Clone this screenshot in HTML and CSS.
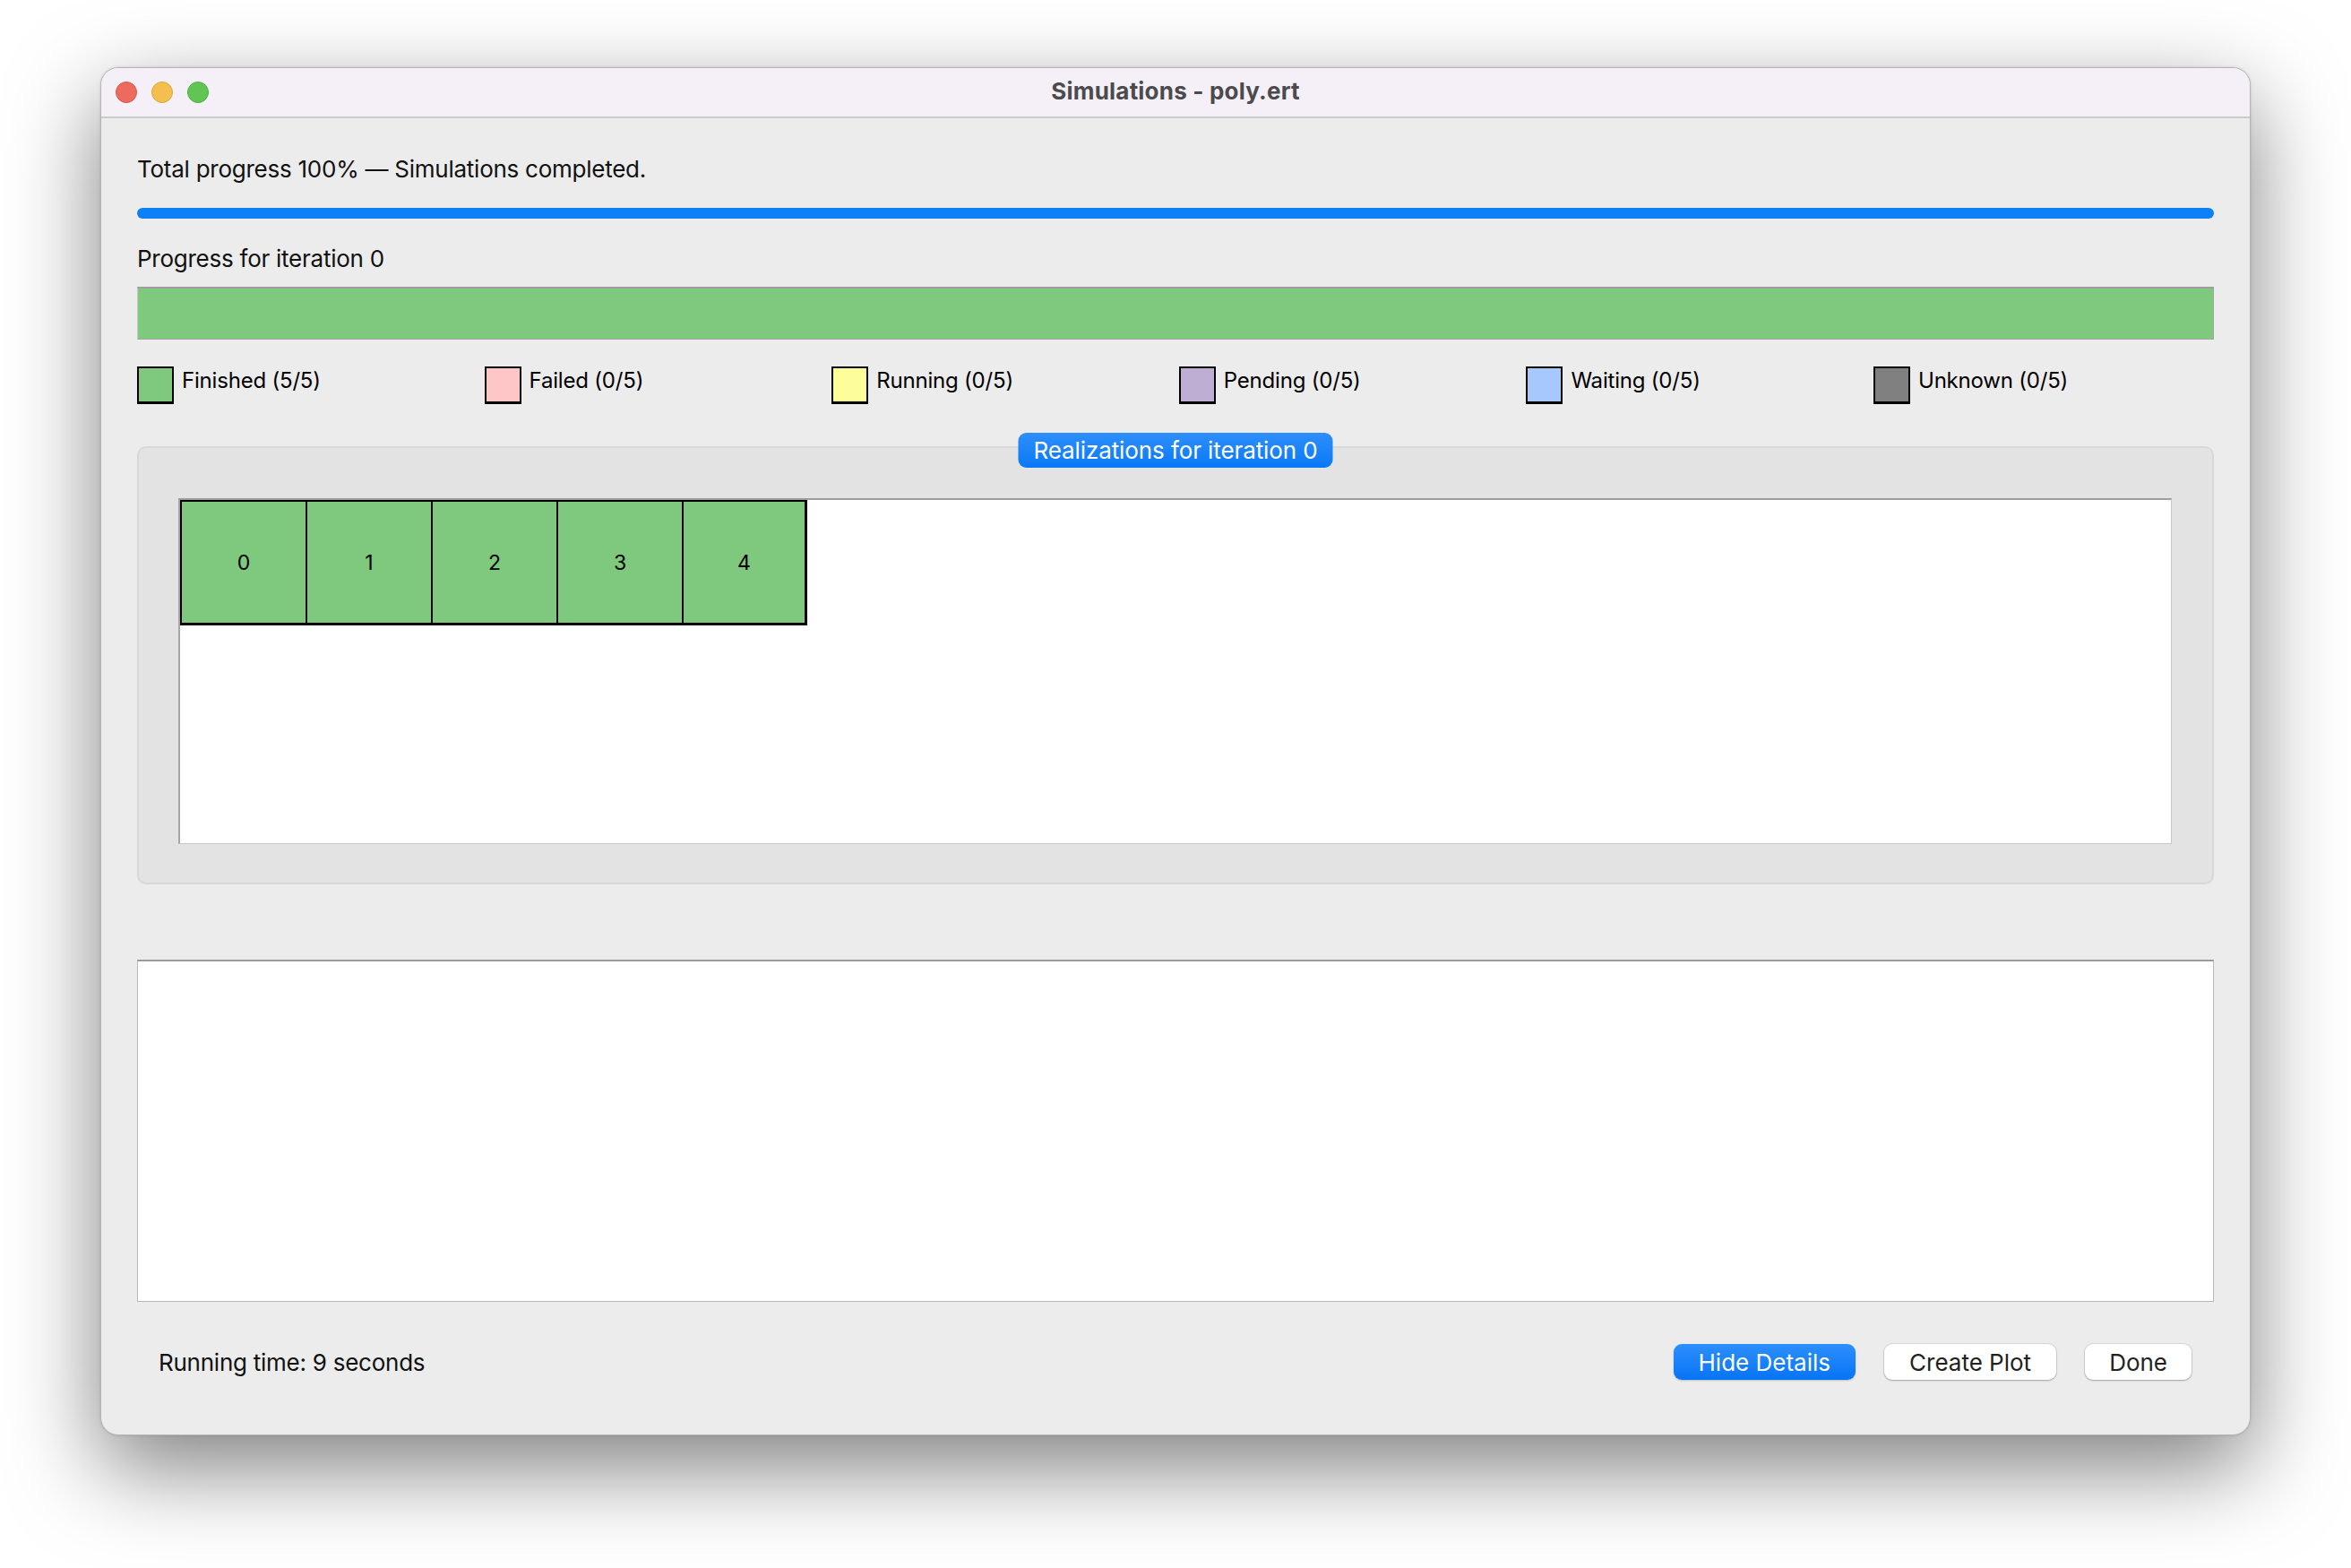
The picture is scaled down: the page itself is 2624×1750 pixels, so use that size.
FILE: index.html
```html
<!DOCTYPE html>
<html>
<head>
<meta charset="utf-8">
<title>Simulations - poly.ert</title>
<link rel="stylesheet" href="styles.css">
</head>
<body>
<div class="desktop">
  <div class="window">
    <div class="titlebar">
      <div class="lights">
        <span class="light red"></span>
        <span class="light yellow"></span>
        <span class="light green"></span>
      </div>
      <div class="title">Simulations - poly.ert</div>
    </div>
    <div class="content">
      <div class="label total">Total progress 100% — Simulations completed.</div>
      <div class="totalbar"></div>
      <div class="label iter">Progress for iteration 0</div>
      <div class="iterbar"></div>
      <div class="legend">
        <div class="item"><span class="swatch finished"></span><span class="lbl">Finished (5/5)</span></div>
        <div class="item"><span class="swatch failed"></span><span class="lbl">Failed (0/5)</span></div>
        <div class="item"><span class="swatch running"></span><span class="lbl">Running (0/5)</span></div>
        <div class="item"><span class="swatch pending"></span><span class="lbl">Pending (0/5)</span></div>
        <div class="item"><span class="swatch waiting"></span><span class="lbl">Waiting (0/5)</span></div>
        <div class="item"><span class="swatch unknown"></span><span class="lbl">Unknown (0/5)</span></div>
      </div>
      <div class="group">
        <div class="group-title">Realizations for iteration 0</div>
        <div class="grid-area">
          <div class="cells">
            <div class="cell">0</div>
            <div class="cell">1</div>
            <div class="cell">2</div>
            <div class="cell">3</div>
            <div class="cell">4</div>
          </div>
        </div>
      </div>
      <div class="details"></div>
      <div class="footer">
        <div class="runtime">Running time: 9 seconds</div>
        <div class="buttons">
          <button class="btn primary">Hide Details</button>
          <button class="btn">Create Plot</button>
          <button class="btn done">Done</button>
        </div>
      </div>
    </div>
  </div>
</div>
</body>
</html>
```

FILE: styles.css
```css
html, body {
  margin: 0;
  padding: 0;
  background: #ffffff;
}
body {
  font-family: Inter, "Noto Sans", "Liberation Sans", sans-serif;
  color: #111;
}
.desktop {
  height: 1750px;
  box-sizing: border-box;
  padding: 75px 0 0 112px;
  overflow: hidden;
}
.window {
  width: 2400px;
  height: 1527px;
  box-sizing: border-box;
  background: #ececec;
  border: 1px solid #b4b4b4;
  border-radius: 20px;
  box-shadow: 0 36px 100px rgba(0,0,0,0.5), 0 0 3px rgba(0,0,0,0.15);
  overflow: hidden;
  display: flex;
  flex-direction: column;
}
.titlebar {
  height: 54px;
  flex: none;
  background: #f5f0f7;
  border-bottom: 2px solid #cbcbcb;
  display: flex;
  align-items: center;
  position: relative;
}
.lights {
  display: flex;
  gap: 16px;
  padding-left: 16px;
}
.light {
  width: 24px;
  height: 24px;
  border-radius: 50%;
  box-sizing: border-box;
}
.light.red { background: #ed6a5e; border: 1px solid #d5574b; }
.light.yellow { background: #f5bf4f; border: 1px solid #dca53a; }
.light.green { background: #61c554; border: 1px solid #4fae43; }
.title {
  position: absolute;
  left: 0;
  right: 0;
  top: 10px;
  text-align: center;
  font-weight: 700;
  font-size: 26px;
  line-height: 32px;
  color: #4b4a4d;
  letter-spacing: 0.2px;
}
.content {
  flex: 1;
  padding: 0 40px;
  display: flex;
  flex-direction: column;
}
.label {
  font-size: 26px;
  line-height: 32px;
  color: #111;
  letter-spacing: -0.25px;
}
.total {
  margin-top: 41px;
}
.totalbar {
  margin-top: 27px;
  height: 12px;
  border-radius: 6px;
  background: #0b80f7;
}
.iter {
  margin-top: 29px;
}
.iterbar {
  margin-top: 15px;
  height: 56px;
  background: #7fc97f;
  border: 1px solid #a3a3a3;
  border-left-color: #c9c9c9;
  border-top: 2px solid #9e9e9e;
}
.legend {
  margin-top: 30px;
  display: grid;
  grid-template-columns: repeat(6, 387.6px);
  height: 42px;
}
.item {
  display: flex;
  align-items: flex-start;
  gap: 9px;
  color: #000;
}
.lbl {
  font-size: 24px;
  line-height: 30px;
  margin-top: 1px;
  letter-spacing: -0.2px;
  white-space: nowrap;
}
.swatch {
  width: 41px;
  height: 42px;
  box-sizing: border-box;
  border: 2px solid #000;
  border-bottom-width: 3px;
  flex: none;
}
.swatch.finished { background: #7fc97f; }
.swatch.failed { background: #fec6c6; }
.swatch.running { background: #fdfd9a; }
.swatch.pending { background: #beaed4; }
.swatch.waiting { background: #a7c8fd; }
.swatch.unknown { background: #808080; }
.group {
  margin-top: 47px;
  height: 489px;
  box-sizing: border-box;
  background: #e3e3e3;
  border: 2px solid #d8d8d8;
  border-radius: 10px;
  position: relative;
  padding: 56px 45px 0 44px;
}
.group-title {
  position: absolute;
  top: -17px;
  left: 50%;
  transform: translateX(-50%);
  height: 39px;
  padding: 0 17px;
  line-height: 39px;
  border-radius: 9px;
  background: linear-gradient(#2e8ffc, #0a78f6);
  color: #fff;
  font-size: 26px;
  letter-spacing: -0.1px;
  white-space: nowrap;
}
.grid-area {
  height: 386px;
  box-sizing: border-box;
  background: #fff;
  border: 1px solid #c8c8c8;
  border-top: 2px solid #9d9d9d;
  border-left: 2px solid #a5a5a5;
}
.cells {
  display: flex;
}
.cell {
  width: 140px;
  height: 140px;
  box-sizing: border-box;
  background: #7fc97f;
  border-top: 2px solid #000;
  border-bottom: 3px solid #000;
  border-left: 2px solid #000;
  display: flex;
  align-items: center;
  justify-content: center;
  font-size: 23px;
  color: #000;
}
.cell:last-child {
  border-right: 3px solid #000;
}
.details {
  margin-top: 84px;
  height: 382px;
  box-sizing: border-box;
  background: #fff;
  border: 1px solid #b9b9b9;
  border-top: 2px solid #9b9b9b;
}
.footer {
  margin-top: 47px;
  display: flex;
  align-items: center;
  justify-content: space-between;
  padding: 0 25px 0 24px;
}
.runtime {
  font-size: 26px;
  letter-spacing: -0.25px;
  color: #111;
}
.buttons {
  display: flex;
  gap: 32px;
}
.btn {
  font-family: Inter, "Noto Sans", "Liberation Sans", sans-serif;
  font-size: 26px;
  height: 40px;
  padding: 0 28px;
  border: none;
  border-radius: 9px;
  background: #ffffff;
  color: #222;
  box-shadow: 0 0 0 1px rgba(0,0,0,0.08), 0 1px 2px rgba(0,0,0,0.25);
}
.btn.primary {
  background: linear-gradient(#2d8ffd, #0774f6);
  color: #fff;
  box-shadow: 0 1px 2px rgba(0,0,0,0.2);
}
.btn.done {
  padding: 0 27px;
}
```
